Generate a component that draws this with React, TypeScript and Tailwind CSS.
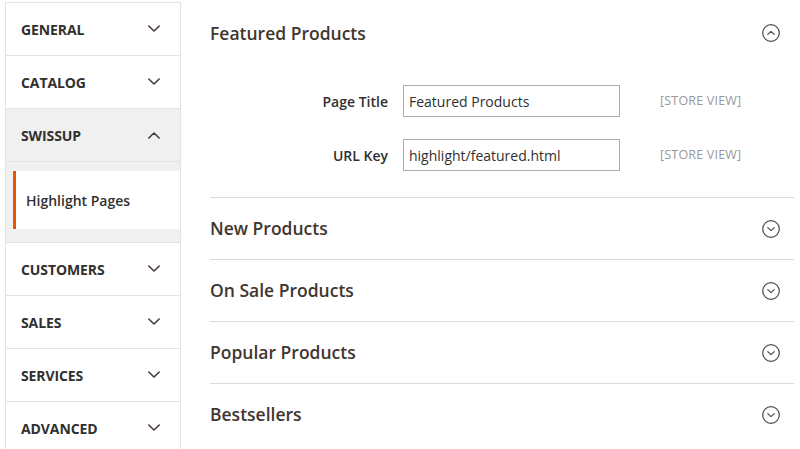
import React from "react";

const sidebarTop = ["GENERAL", "CATALOG"];
const sidebarBottom = ["CUSTOMERS", "SALES", "SERVICES", "ADVANCED"];
const sections = ["New Products", "On Sale Products", "Popular Products", "Bestsellers"];

function Chevron({ up = false }: { up?: boolean }) {
  return (
    <svg width="14" height="8" viewBox="0 0 14 8" fill="none" className="text-[#41362f]">
      <path
        d={up ? "M1.8 7L7 2L12.2 7" : "M1.8 1L7 6L12.2 1"}
        stroke="currentColor"
        strokeWidth="1.5"
        strokeLinecap="round"
        strokeLinejoin="round"
      />
    </svg>
  );
}

function CircleChevron({ up = false }: { up?: boolean }) {
  return (
    <svg width="20" height="20" viewBox="0 0 20 20" fill="none" className="text-[#514943]">
      <circle cx="10" cy="10" r="8.3" stroke="currentColor" strokeWidth="1.2" />
      <path
        d={up ? "M6.8 11.4L10 8.4L13.2 11.4" : "M6.8 8.6L10 11.6L13.2 8.6"}
        stroke="currentColor"
        strokeWidth="1.2"
        strokeLinecap="round"
        strokeLinejoin="round"
      />
    </svg>
  );
}

function SideItem({ label, active = false }: { label: string; active?: boolean }) {
  return (
    <div
      className={`flex items-center justify-between h-[53px] pl-[15px] pr-[19px] border-b border-[#e3e3e3] ${
        active ? "bg-[#f0f0f0]" : "bg-white"
      }`}
    >
      <span className="text-[14px] font-bold text-[#303030] tracking-[-0.1px]">{label}</span>
      <Chevron up={active} />
    </div>
  );
}

function Field({ label, value }: { label: string; value: string }) {
  return (
    <div className="flex items-center h-8">
      <label className="w-[193px] text-right text-[14px] font-semibold text-[#303030] pr-[15px]">{label}</label>
      <div className="w-[217px] h-8 border border-[#adadad] flex items-center px-[5px] text-[14px] text-[#303030]">
        {value}
      </div>
      <span className="ml-10 text-[12.5px] text-[#999999] tracking-[0.2px]">[STORE VIEW]</span>
    </div>
  );
}

export default function App() {
  return (
    <div className="w-[800px] h-[449px] overflow-hidden bg-white flex font-['Open_Sans',sans-serif]">
      {/* Sidebar */}
      <aside className="ml-[5px] mt-[2px] w-[176px] shrink-0 border-l border-r border-t border-[#e3e3e3] self-start">
        {sidebarTop.map((item) => (
          <SideItem key={item} label={item} />
        ))}
        <SideItem label="SWISSUP" active />
        <div className="bg-[#f0f0f0] pt-[9px] pb-[13px] pl-[7px] border-b border-[#e3e3e3]">
          <div className="h-[58px] bg-white border-l-[3px] border-[#eb5202] flex items-center pl-[10px]">
            <span className="text-[14px] font-semibold text-[#303030]">Highlight Pages</span>
          </div>
        </div>
        {sidebarBottom.map((item) => (
          <SideItem key={item} label={item} />
        ))}
      </aside>

      {/* Content */}
      <main className="ml-[29px] mr-[6px] flex-1 pt-[2px]">
        <div>
          <div className="h-[62px] flex items-center justify-between pr-[13px]">
            <h2 className="text-[17.5px] font-semibold text-[#41362f]">Featured Products</h2>
            <CircleChevron up />
          </div>
          <div className="pt-[21px] pb-[26px] flex flex-col gap-[22px]">
            <Field label="Page Title" value="Featured Products" />
            <Field label="URL Key" value="highlight/featured.html" />
          </div>
        </div>
        {sections.map((s) => (
          <div key={s} className="h-[62px] border-t border-[#dcdcdc] flex items-center justify-between pr-[13px]">
            <h2 className="text-[17.5px] font-semibold text-[#41362f]">{s}</h2>
            <CircleChevron />
          </div>
        ))}
      </main>
    </div>
  );
}
